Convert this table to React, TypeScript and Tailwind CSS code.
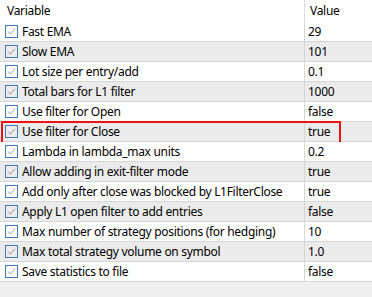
import React from 'react';

interface Param {
  name: string;
  value: string;
}

const params: Param[] = [
  { name: 'Fast EMA', value: '29' },
  { name: 'Slow EMA', value: '101' },
  { name: 'Lot size per entry/add', value: '0.1' },
  { name: 'Total bars for L1 filter', value: '1000' },
  { name: 'Use filter for Open', value: 'false' },
  { name: 'Use filter for Close', value: 'true' },
  { name: 'Lambda in lambda_max units', value: '0.2' },
  { name: 'Allow adding in exit-filter mode', value: 'true' },
  { name: 'Add only after close was blocked by L1FilterClose', value: 'true' },
  { name: 'Apply L1 open filter to add entries', value: 'false' },
  { name: 'Max number of strategy positions (for hedging)', value: '10' },
  { name: 'Max total strategy volume on symbol', value: '1.0' },
  { name: 'Save statistics to file', value: 'false' },
];

function CheckBox() {
  return (
    <svg width="13" height="13" viewBox="0 0 13 13" className="shrink-0">
      <rect x="0.5" y="0.5" width="12" height="12" fill="none" stroke="#3f7ab8" />
      <path d="M3 6.5 L5.3 9 L10 3.8" fill="none" stroke="#b4b4b4" strokeWidth="1.1" />
    </svg>
  );
}

export default function App() {
  const highlighted = 5;

  return (
    <div
      className="w-[372px] h-[297px] bg-[#f0f0f0] overflow-hidden text-[12px] tracking-[-0.3px] text-black"
      style={{ fontFamily: '"Noto Sans", "Segoe UI", sans-serif' }}
    >
      <div className="flex h-[22px] bg-white">
        <div className="w-[305px] border-r border-[#dcdcdc] pl-[7px] flex items-center">Variable</div>
        <div className="flex-1 pl-[5px] flex items-center">Value</div>
      </div>

      {params.map((p, i) => (
        <div
          key={p.name}
          className={`relative flex h-[20px] border-b border-[#d6d6d6] ${i % 2 === 1 ? 'bg-[#ebebeb]' : 'bg-white'}`}
        >
          <div className="w-[305px] border-r border-[#d6d6d6] pl-[5px] flex items-center gap-[4px] whitespace-nowrap overflow-hidden">
            <CheckBox />
            <span>{p.name}</span>
          </div>
          <div className="flex-1 pl-[3px] flex items-center">{p.value}</div>
          {i === highlighted && (
            <div className="absolute left-[1px] top-[-1px] w-[340px] h-[23px] border-2 border-[#ee1111]" />
          )}
        </div>
      ))}
    </div>
  );
}
